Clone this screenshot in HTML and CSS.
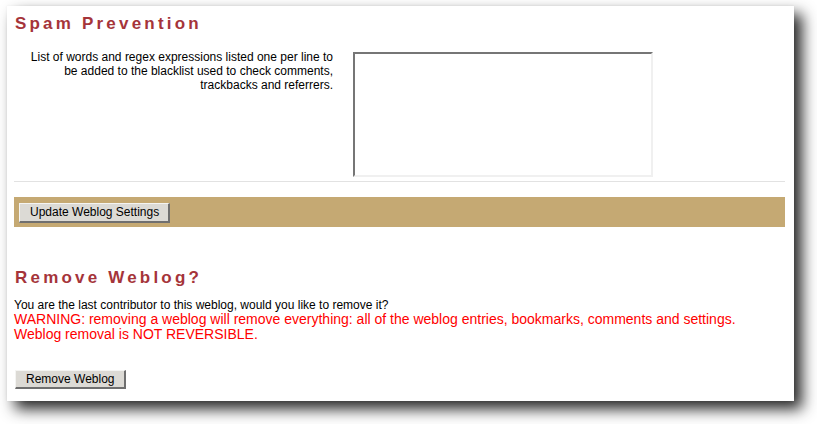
FILE: index.html
```html
<!DOCTYPE html>
<html>
<head>
<meta charset="utf-8">
<link rel="stylesheet" href="styles.css">
</head>
<body>
<div class="panel">
  <h2 class="title">Spam Prevention</h2>
  <div class="form-row">
    <div class="label">List of words and regex expressions listed one per line to be added to the blacklist used to check comments, trackbacks and referrers.</div>
    <textarea class="field"></textarea>
  </div>
  <hr class="rule">
  <div class="bar"><button class="btn btn-update">Update Weblog Settings</button></div>
  <h2 class="title title-remove">Remove Weblog?</h2>
  <p class="note">You are the last contributor to this weblog, would you like to remove it?</p>
  <p class="warn">WARNING: removing a weblog will remove everything: all of the weblog entries, bookmarks, comments and settings.<br>Weblog removal is NOT REVERSIBLE.</p>
  <button class="btn btn-remove">Remove Weblog</button>
</div>
</body>
</html>
```

FILE: styles.css
```css
html, body {
  margin: 0;
  padding: 0;
  background: #ffffff;
}
body {
  min-height: 424px;
  font-family: "Liberation Sans", Arial, sans-serif;
  color: #000;
}
.panel {
  box-sizing: border-box;
  margin: 6px 0 0 7px;
  width: 787px;
  height: 395px;
  padding: 0 9px 0 7px;
  background: #ffffff;
  box-shadow: 0 0 2px rgba(0,0,0,0.06), 8px 8px 14px rgba(0,0,0,0.85);
  display: flex;
  flex-direction: column;
  align-items: flex-start;
}
.title {
  margin: 8px 0 0 1px;
  font-size: 17px;
  line-height: 20px;
  font-weight: bold;
  letter-spacing: 3.2px;
  color: #a5343a;
}
.form-row {
  margin-top: 16px;
  display: flex;
  gap: 20px;
  align-items: flex-start;
}
.label {
  width: 310px;
  margin-left: 9px;
  text-align: right;
  font-size: 12px;
  line-height: 14px;
}
.field {
  box-sizing: border-box;
  margin: 2px 0 0 0;
  width: 300px;
  height: 125px;
  padding: 0;
  resize: none;
  background: #fff;
  border-style: solid;
  border-width: 2px;
  border-color: #767676 #f0f0f0 #f0f0f0 #767676;
}
.rule {
  align-self: stretch;
  margin: 4px 0 0 0;
  border: 0;
  height: 1px;
  background: #e2e2e2;
}
.bar {
  align-self: stretch;
  box-sizing: border-box;
  margin-top: 15px;
  height: 30px;
  padding: 5px;
  background: #c5a973;
}
.btn {
  box-sizing: border-box;
  font-family: "Liberation Sans", Arial, sans-serif;
  font-size: 12px;
  color: #000;
  background: #dcdad5;
  border-style: solid;
  border-width: 1px 2px 2px 1px;
  border-color: #f4f4f2 #6f6f6f #6f6f6f #f4f4f2;
  padding: 0 9px 0 10px;
  margin: 0;
}
.btn-update {
  height: 20px;
}
.title-remove {
  margin-top: 41px;
}
.note {
  margin: 10px 0 0 0;
  font-size: 12px;
  line-height: 14px;
}
.warn {
  margin: 0;
  font-size: 14px;
  line-height: 15px;
  color: #ff0000;
}
.btn-remove {
  margin-top: 28px;
  margin-left: 1px;
  height: 19px;
}
```
